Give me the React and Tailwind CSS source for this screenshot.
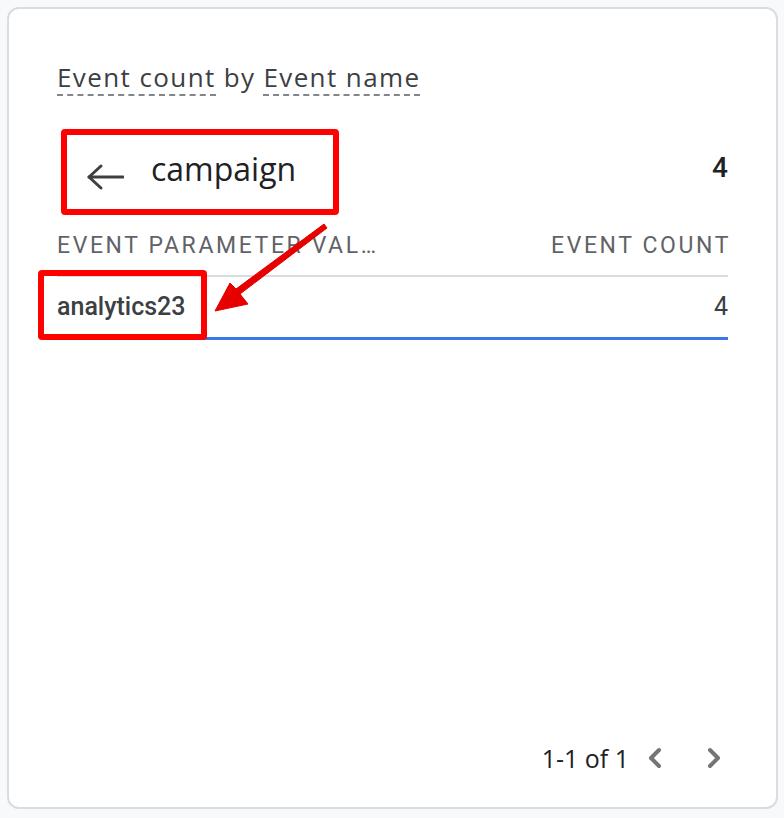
import React from 'react';
import { ChevronLeft, ChevronRight } from 'lucide-react';

const sans = { fontFamily: '"Open Sans", Roboto, sans-serif' };

export default function App() {
  return (
    <div className="w-[784px] h-[818px] bg-[#f8f9fa] p-[7px]" style={{ fontFamily: 'Roboto, "Liberation Sans", sans-serif' }}>
      <div className="relative w-[771px] h-[802px] bg-white border-2 border-[#dadce0] rounded-[12px] flex flex-col px-[48px]">
        {/* Card title */}
        <div className="mt-[52px] flex items-start gap-[8px] text-[26px] leading-[32px] tracking-[1.4px] text-[#3c4043]" style={sans}>
          <span className="border-b-2 border-dashed border-[#80868b] pb-[1px]">Event count</span>
          <span>by</span>
          <span className="border-b-2 border-dashed border-[#80868b] pb-[1px]">Event name</span>
        </div>

        {/* Drilldown header */}
        <div className="mt-[41px] h-[60px] flex items-center justify-between">
          <div className="flex items-center">
            <svg className="ml-[29px] mt-[20px]" width="38" height="28" viewBox="0 0 38 28" fill="none" stroke="#3c4043" strokeWidth="3" strokeLinecap="round" strokeLinejoin="round">
              <path d="M37 14 H3" />
              <path d="M15 3 L3 14 L15 25" />
            </svg>
            <span className="ml-[27px] mt-[4px] text-[32px] text-[#202124]" style={sans}>campaign</span>
          </div>
          <span className="mt-[2px] text-[28px] font-medium text-[#202124]">4</span>
        </div>

        {/* Table header */}
        <div className="mt-[32px] flex justify-between items-center h-[34px] text-[23px] tracking-[2.6px] text-[#5f6368]">
          <span>EVENT PARAMETER VAL…</span>
          <span className="-mr-[3px]">EVENT COUNT</span>
        </div>
        <div className="mt-[12px] h-[2px] bg-[#dadce0]" />

        {/* Row */}
        <div className="h-[60px] flex justify-between items-center text-[25px]">
          <span className="font-medium text-[#3c4043]">analytics23</span>
          <span className="text-[#3c4043]">4</span>
        </div>
        <div className="h-[3px] bg-[#3b78e7]" />

        <div className="flex-1" />

        {/* Pagination */}
        <div className="mb-[30px] flex items-center justify-end text-[25px] text-[#202124]" style={sans}>
          <span>1-1 of 1</span>
          <ChevronLeft className="w-[32px] h-[32px] ml-[10px] text-[#757575]" strokeWidth={3} />
          <ChevronRight className="w-[32px] h-[32px] ml-[27px] -mr-[2px] text-[#757575]" strokeWidth={3} />
        </div>

        {/* Annotation overlays */}
        <div className="absolute left-[52px] top-[120px] w-[278px] h-[86px] border-[6px] border-[#ff0000] rounded-[4px] pointer-events-none" />
        <div className="absolute left-[29px] top-[261px] w-[169px] h-[70px] border-[6px] border-[#ff0000] rounded-[4px] pointer-events-none" />
        <svg className="absolute left-0 top-0 pointer-events-none" width="771" height="802" viewBox="7 7 771 802">
          <path d="M322 222 L325 226 L238 292 L246 302 L213 309 L228 281 L234 287 Z" fill="#e60000" strokeLinejoin="round" stroke="#e60000" strokeWidth="1" />
        </svg>
      </div>
    </div>
  );
}
